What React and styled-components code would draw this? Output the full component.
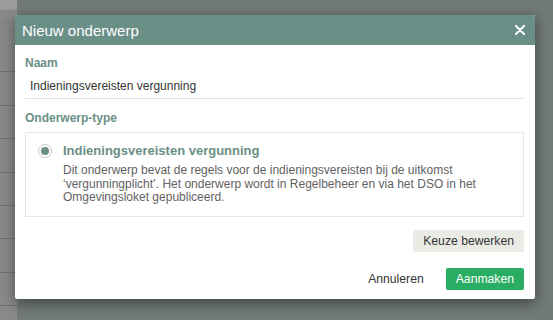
import React from "react";
import styled, { createGlobalStyle } from "styled-components";

const GlobalStyle = createGlobalStyle`
  html, body {
    margin: 0;
    padding: 0;
    height: 100%;
  }
  body {
    font-family: "Liberation Sans", Arial, sans-serif;
    background: #717a77;
  }
`;

const Page = styled.div`
  position: relative;
  display: flex;
  width: 553px;
  height: 320px;
  overflow: hidden;
  background: #717a77;
`;

const Strip = styled.div`
  width: 17px;
  display: flex;
  flex-direction: column;
  background: #898989;
`;

const StripRow = styled.div`
  height: ${(p) => p.h}px;
  flex: none;
  box-sizing: border-box;
  background: ${(p) => (p.light ? "#9b9b9b" : "transparent")};
  border-bottom: 1px solid ${(p) => (p.faint ? "#838383" : "#707070")};
`;

const Overlay = styled.div`
  position: absolute;
  inset: 0;
  padding: 15px 0 0 15px;
`;

const Modal = styled.div`
  width: 520px;
  height: 284px;
  display: flex;
  flex-direction: column;
  background: #fff;
  border-radius: 2px;
  box-shadow: 0 4px 14px rgba(0, 0, 0, 0.45);
  overflow: hidden;
`;

const Header = styled.div`
  height: 30px;
  flex: none;
  display: flex;
  align-items: center;
  justify-content: space-between;
  padding: 0 10px 0 7px;
  background: #6a8f86;
  color: #fff;
`;

const Title = styled.h1`
  margin: 0;
  font-size: 15px;
  font-weight: normal;
`;

const Close = styled.button`
  border: 0;
  padding: 0;
  background: none;
  display: flex;
  cursor: pointer;
`;

const Body = styled.div`
  display: flex;
  flex-direction: column;
  padding: 11px 11px 10px 10px;
`;

const Label = styled.div`
  font-size: 12px;
  line-height: 14px;
  font-weight: bold;
  color: #6a8f86;
  margin-top: ${(p) => p.top || 0}px;
  margin-bottom: ${(p) => p.bottom || 0}px;
`;

const Input = styled.div`
  height: 25px;
  box-sizing: border-box;
  display: flex;
  align-items: center;
  padding: 0 5px 1px;
  font-size: 12px;
  color: #333;
  border-bottom: 1px solid #e2e2dc;
`;

const OptionBox = styled.div`
  display: flex;
  align-items: flex-start;
  padding: 10px 12px 11px 12px;
  border: 1px solid #e6e6e4;
`;

const Radio = styled.span`
  width: 14px;
  height: 14px;
  box-sizing: border-box;
  flex: none;
  margin: 1px 11px 0 0;
  border-radius: 50%;
  border: 1px solid #c9cbc4;
  display: flex;
  align-items: center;
  justify-content: center;
  &::after {
    content: "";
    width: 8px;
    height: 8px;
    border-radius: 50%;
    background: #6a8f86;
  }
`;

const OptionText = styled.div`
  display: flex;
  flex-direction: column;
`;

const OptionTitle = styled.div`
  font-size: 13px;
  line-height: 16px;
  font-weight: bold;
  color: #6a8f86;
`;

const OptionDesc = styled.div`
  margin-top: 5px;
  font-size: 12px;
  line-height: 13.5px;
  color: #626262;
`;

const Row = styled.div`
  display: flex;
  justify-content: flex-end;
  align-items: center;
  gap: 22px;
  margin-top: ${(p) => p.top}px;
`;

const Button = styled.button`
  height: 22px;
  border: 0;
  border-radius: 2px;
  padding: 0 ${(p) => (p.link ? 0 : p.primary ? 10 : 10)}px;
  font-family: "Liberation Sans", Arial, sans-serif;
  font-size: 12.2px;
  cursor: pointer;
  background: ${(p) => (p.primary ? "#28ad62" : p.link ? "transparent" : "#ebebe5")};
  color: ${(p) => (p.primary ? "#fff" : "#333")};
`;

const stripRows = [
  { h: 11, light: true, faint: true },
  { h: 11, faint: true },
  { h: 50 },
  { h: 34 },
  { h: 33 },
  { h: 34 },
  { h: 33 },
  { h: 33 },
  { h: 34 },
  { h: 33 },
];

export default function App() {
  return (
    <>
      <GlobalStyle />
      <Page>
        <Strip>
          {stripRows.map((r, i) => (
            <StripRow key={i} {...r} />
          ))}
        </Strip>
        <Overlay>
          <Modal>
            <Header>
              <Title>Nieuw onderwerp</Title>
              <Close aria-label="Sluiten">
                <svg width="10" height="10" viewBox="0 0 10 10">
                  <path d="M1 1L9 9M9 1L1 9" stroke="#fff" strokeWidth="2.2" strokeLinecap="round" />
                </svg>
              </Close>
            </Header>
            <Body>
              <Label bottom={4}>Naam</Label>
              <Input>Indieningsvereisten vergunning</Input>
              <Label top={12} bottom={7}>Onderwerp-type</Label>
              <OptionBox>
                <Radio />
                <OptionText>
                  <OptionTitle>Indieningsvereisten vergunning</OptionTitle>
                  <OptionDesc>
                    Dit onderwerp bevat de regels voor de indieningsvereisten bij de uitkomst
                    <br />
                    ‘vergunningplicht’. Het onderwerp wordt in Regelbeheer en via het DSO in het
                    <br />
                    Omgevingsloket gepubliceerd.
                  </OptionDesc>
                </OptionText>
              </OptionBox>
              <Row top={13}>
                <Button>Keuze bewerken</Button>
              </Row>
              <Row top={16}>
                <Button link>Annuleren</Button>
                <Button primary>Aanmaken</Button>
              </Row>
            </Body>
          </Modal>
        </Overlay>
      </Page>
    </>
  );
}
